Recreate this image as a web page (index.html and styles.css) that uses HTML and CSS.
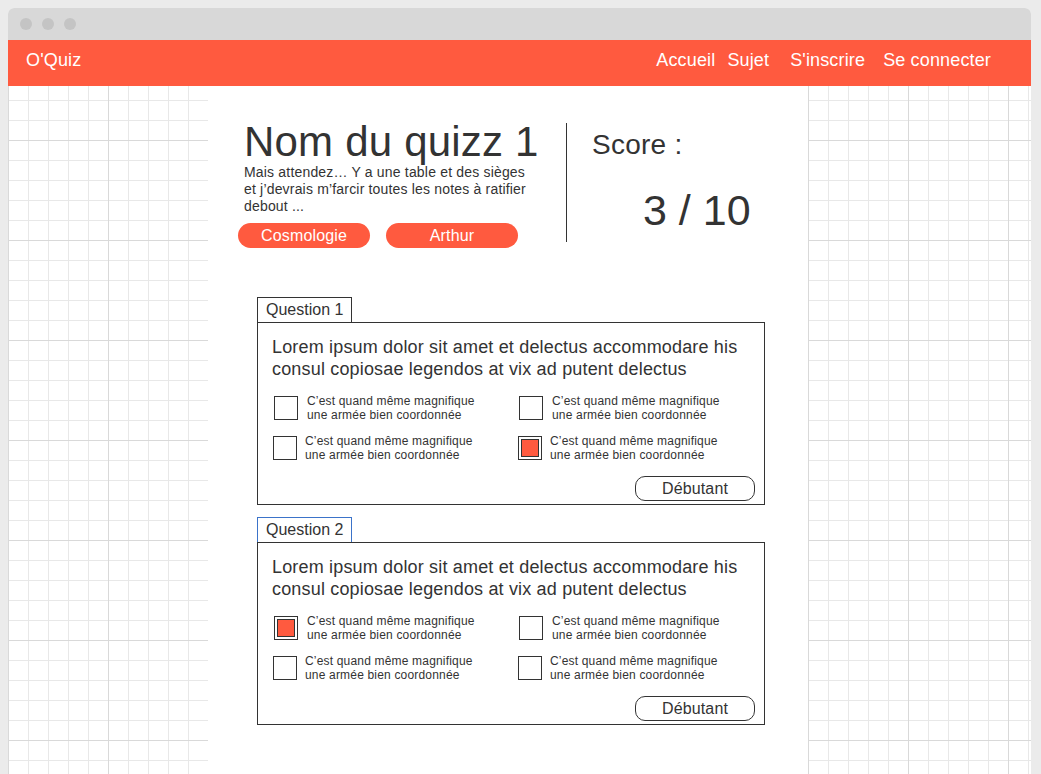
FILE: index.html
```html
<!DOCTYPE html>
<html lang="fr">
<head>
<meta charset="utf-8">
<title>O'Quiz</title>
<link rel="stylesheet" href="styles.css">
</head>
<body>
<div class="window">
  <div class="titlebar">
    <span class="dot"></span><span class="dot"></span><span class="dot"></span>
  </div>
  <div class="app">
    <nav class="nav">
      <a class="brand" href="#">O'Quiz</a>
      <div class="links">
        <a class="link" href="#">Accueil</a>
        <a class="link link-sujet" href="#">Sujet</a>
        <a class="link link-inscrire" href="#">S'inscrire</a>
        <a class="link link-connecter" href="#">Se connecter</a>
      </div>
    </nav>
    <main class="canvas">
      <div class="sheet">
        <header class="quiz-head">
          <div class="quiz-info">
            <h1 class="quiz-title">Nom du quizz 1</h1>
            <p class="desc">Mais attendez… Y a une table et des sièges et j’devrais m’farcir toutes les notes à ratifier debout ...</p>
            <div class="tags">
              <span class="tag">Cosmologie</span>
              <span class="tag">Arthur</span>
            </div>
          </div>
          <div class="score">
            <div class="score-label">Score :</div>
            <div class="score-value">3 / 10</div>
          </div>
        </header>

        <section class="questions">
          <article class="question">
            <div class="q-tab">Question 1</div>
            <div class="q-box">
              <p class="q-text">Lorem ipsum dolor sit amet et delectus accommodare his consul copiosae legendos at vix ad putent delectus</p>
              <div class="options">
                <div class="option"><span class="check"></span><span class="opt-text">C’est quand même magnifique<br>une armée bien coordonnée</span></div>
                <div class="option"><span class="check"></span><span class="opt-text">C’est quand même magnifique<br>une armée bien coordonnée</span></div>
                <div class="option option-shift"><span class="check"></span><span class="opt-text">C’est quand même magnifique<br>une armée bien coordonnée</span></div>
                <div class="option option-shift"><span class="check checked"></span><span class="opt-text">C’est quand même magnifique<br>une armée bien coordonnée</span></div>
              </div>
              <div class="q-foot"><span class="level">Débutant</span></div>
            </div>
          </article>

          <article class="question">
            <div class="q-tab q-tab-active">Question 2</div>
            <div class="q-box">
              <p class="q-text">Lorem ipsum dolor sit amet et delectus accommodare his consul copiosae legendos at vix ad putent delectus</p>
              <div class="options">
                <div class="option"><span class="check checked"></span><span class="opt-text">C’est quand même magnifique<br>une armée bien coordonnée</span></div>
                <div class="option"><span class="check"></span><span class="opt-text">C’est quand même magnifique<br>une armée bien coordonnée</span></div>
                <div class="option option-shift"><span class="check"></span><span class="opt-text">C’est quand même magnifique<br>une armée bien coordonnée</span></div>
                <div class="option option-shift"><span class="check"></span><span class="opt-text">C’est quand même magnifique<br>une armée bien coordonnée</span></div>
              </div>
              <div class="q-foot"><span class="level">Débutant</span></div>
            </div>
          </article>
        </section>
      </div>
    </main>
  </div>
</div>
</body>
</html>
```

FILE: styles.css
```css
* {
  box-sizing: border-box;
}

html, body {
  margin: 0;
  padding: 0;
  background: #ebebeb;
  font-family: "Liberation Sans", Arial, sans-serif;
  color: #333;
  overflow: hidden;
}

.window {
  margin: 8px 0 0 8px;
  width: 1023px;
  background: #fff;
  border-radius: 6px 6px 0 0;
  overflow: hidden;
}

.titlebar {
  height: 32px;
  background: #d8d8d8;
  display: flex;
  align-items: center;
  gap: 10px;
  padding-left: 12px;
}

.dot {
  width: 12px;
  height: 12px;
  border-radius: 50%;
  background: #c4c4c4;
}

.app {
  background-color: #fff;
  background-image:
    linear-gradient(to right, #d9d9d9 1px, transparent 1px),
    linear-gradient(to bottom, #d9d9d9 1px, transparent 1px),
    linear-gradient(to right, #e8e8e8 1px, transparent 1px),
    linear-gradient(to bottom, #e8e8e8 1px, transparent 1px);
  background-size: 100px 100px, 100px 100px, 20px 20px, 20px 20px;
  background-position: 0 0;
}

.nav {
  height: 46px;
  background: #ff5a3f;
  display: flex;
  justify-content: space-between;
  align-items: flex-start;
  padding: 10px 40px 0 18px;
  font-size: 18px;
  line-height: 20px;
  letter-spacing: 0.15px;
}

.nav a {
  color: #fff;
  text-decoration: none;
}

.links {
  display: flex;
}

.link-sujet {
  margin-left: 12px;
}

.link-inscrire {
  margin-left: 21px;
}

.link-connecter {
  margin-left: 18px;
}

.canvas {
  min-height: 700px;
}

.sheet {
  margin-left: 200px;
  width: 600px;
  min-height: 700px;
  background: #fff;
  padding-top: 37px;
}

.quiz-head {
  display: flex;
  align-items: flex-start;
}

.quiz-info {
  margin-left: 30px;
  width: 328px;
}

.quiz-title {
  margin: -2px 0 0 6px;
  font-size: 42px;
  line-height: 42px;
  letter-spacing: 0.2px;
  font-weight: normal;
  color: #333;
}

.desc {
  margin: 1px 0 0 6px;
  width: 290px;
  font-size: 14px;
  line-height: 17px;
  letter-spacing: 0.18px;
}

.tags {
  display: flex;
  gap: 16px;
  margin-top: 8px;
}

.tag {
  width: 132px;
  height: 25px;
  border-radius: 13px;
  background: #ff5a3f;
  color: #fff;
  font-size: 16px;
  line-height: 25px;
  letter-spacing: 0.15px;
  text-align: center;
}

.score {
  border-left: 1px solid #333;
  height: 119px;
  padding-left: 25px;
}

.score-label {
  margin-top: 8px;
  font-size: 28px;
  line-height: 28px;
  letter-spacing: 0.25px;
}

.score-value {
  margin: 29px 0 0 51px;
  font-size: 43px;
  line-height: 44px;
}

.questions {
  margin: 49px 0 0 49px;
  width: 508px;
  display: flex;
  flex-direction: column;
  gap: 12px;
}

.q-tab {
  align-self: flex-start;
  width: 95px;
  height: 25px;
  border: 1px solid #333;
  border-bottom: none;
  padding: 0 8px;
  font-size: 16px;
  line-height: 23px;
  white-space: nowrap;
}

.q-tab-active {
  border-color: #3b73c9;
}

.q-box {
  border: 1px solid #333;
  padding: 13px 9px 3px 14px;
}

.q-text {
  margin: 0;
  font-size: 18px;
  line-height: 22px;
  letter-spacing: 0.17px;
  padding-right: 10px;
}

.options {
  display: grid;
  grid-template-columns: 245px 1fr;
  row-gap: 12px;
  margin: 14px 0 0 2px;
}

.option {
  display: flex;
  align-items: center;
  gap: 9px;
  height: 28px;
}

.option-shift {
  margin-left: -1px;
  gap: 8px;
}

.check {
  position: relative;
  flex: none;
  width: 24px;
  height: 24px;
  border: 1px solid #333;
  background: #fff;
}

.check.checked::after {
  content: "";
  position: absolute;
  inset: 2px;
  background: #ff5a3f;
  border: 1px solid #333;
}

.opt-text {
  font-size: 12px;
  line-height: 14px;
  letter-spacing: 0.18px;
}

.q-foot {
  display: flex;
  justify-content: flex-end;
  margin-top: 14px;
}

.level {
  width: 120px;
  height: 25px;
  border: 1px solid #333;
  border-radius: 10px;
  font-size: 16px;
  line-height: 23px;
  letter-spacing: 0.15px;
  text-align: center;
}
```
